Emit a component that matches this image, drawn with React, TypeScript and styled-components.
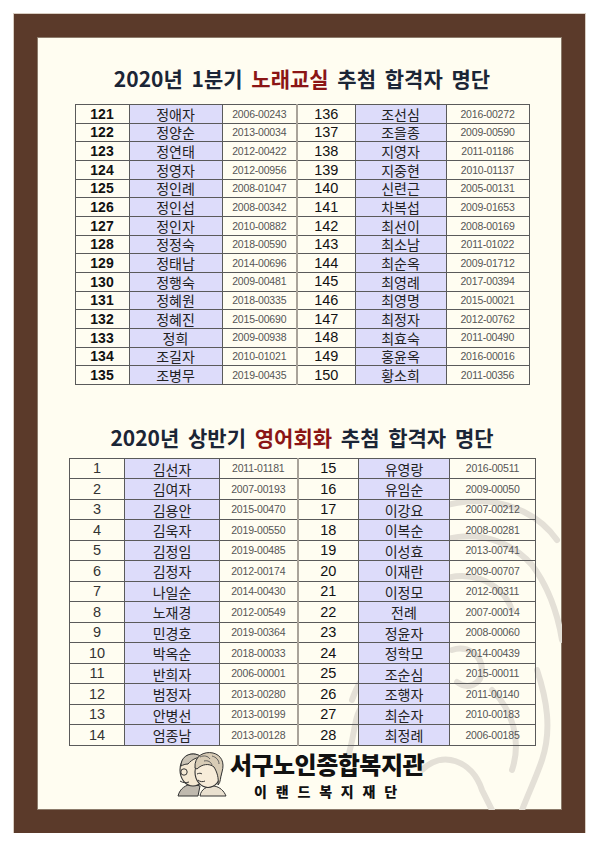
import React from 'react'
import styled, {createGlobalStyle} from 'styled-components'

type Row = [string, string, string, string, string, string]

const singingRows: Row[] = [
  ['121', '정애자', '2006-00243', '136', '조선심', '2016-00272'],
  ['122', '정양순', '2013-00034', '137', '조을종', '2009-00590'],
  ['123', '정연태', '2012-00422', '138', '지영자', '2011-01186'],
  ['124', '정영자', '2012-00956', '139', '지중현', '2010-01137'],
  ['125', '정인례', '2008-01047', '140', '신련근', '2005-00131'],
  ['126', '정인섭', '2008-00342', '141', '차복섭', '2009-01653'],
  ['127', '정인자', '2010-00882', '142', '최선이', '2008-00169'],
  ['128', '정정숙', '2018-00590', '143', '최소남', '2011-01022'],
  ['129', '정태남', '2014-00696', '144', '최순옥', '2009-01712'],
  ['130', '정행숙', '2009-00481', '145', '최영례', '2017-00394'],
  ['131', '정혜원', '2018-00335', '146', '최영명', '2015-00021'],
  ['132', '정혜진', '2015-00690', '147', '최정자', '2012-00762'],
  ['133', '정희', '2009-00938', '148', '최효숙', '2011-00490'],
  ['134', '조길자', '2010-01021', '149', '홍윤옥', '2016-00016'],
  ['135', '조병무', '2019-00435', '150', '황소희', '2011-00356'],
]

const englishRows: Row[] = [
  ['1', '김선자', '2011-01181', '15', '유영랑', '2016-00511'],
  ['2', '김여자', '2007-00193', '16', '유임순', '2009-00050'],
  ['3', '김용안', '2015-00470', '17', '이강요', '2007-00212'],
  ['4', '김욱자', '2019-00550', '18', '이복순', '2008-00281'],
  ['5', '김정임', '2019-00485', '19', '이성효', '2013-00741'],
  ['6', '김정자', '2012-00174', '20', '이재란', '2009-00707'],
  ['7', '나일순', '2014-00430', '21', '이정모', '2012-00311'],
  ['8', '노재경', '2012-00549', '22', '전례', '2007-00014'],
  ['9', '민경호', '2019-00364', '23', '정윤자', '2008-00060'],
  ['10', '박옥순', '2018-00033', '24', '정학모', '2014-00439'],
  ['11', '반희자', '2006-00001', '25', '조순심', '2015-00011'],
  ['12', '범정자', '2013-00280', '26', '조행자', '2011-00140'],
  ['13', '안병선', '2013-00199', '27', '최순자', '2010-00183'],
  ['14', '엄종남', '2013-00128', '28', '최정례', '2006-00185'],
]

type TableProps = {
  rows: Row[]
  widths: number[]
  rowHeight: number
  boldFirst: boolean
}

const WinnerTable: React.FC<TableProps> = ({rows, widths, rowHeight, boldFirst}) => (
  <Table $width={widths.reduce((a, b) => a + b, 0)}>
    <colgroup>
      {widths.map((w, i) => (
        <col key={i} style={{width: w}} />
      ))}
    </colgroup>
    <tbody>
      {rows.map(r => (
        <Tr key={r[0]} $h={rowHeight}>
          <NumCell $bold={boldFirst} $light={!boldFirst}>{r[0]}</NumCell>
          <NameCell>{r[1]}</NameCell>
          <CodeCell $divider>{r[2]}</CodeCell>
          <NumCell>{r[3]}</NumCell>
          <NameCell>{r[4]}</NameCell>
          <CodeCell>{r[5]}</CodeCell>
        </Tr>
      ))}
    </tbody>
  </Table>
)

const Elders: React.FC = () => (
  <svg width="54" height="50" viewBox="0 0 54 50">
    <path d="M4 48 C6 40 12 37 18 36 L26 38 L24 48 Z" fill="#bfb9ae" stroke="#333" strokeWidth="1" />
    <ellipse cx="19" cy="22" rx="13" ry="16" fill="#f4e8d2" stroke="#333" strokeWidth="1.1" />
    <path d="M7 18 C7 6 20 3 28 9 C24 9 18 11 14 16 C11 16 9 17 7 18 Z" fill="#c9c2b4" stroke="#333" strokeWidth="1" />
    <circle cx="10" cy="24" r="3.2" fill="none" stroke="#333" strokeWidth="1" />
    <path d="M6 33 C9 35 12 35 15 34" fill="none" stroke="#333" strokeWidth="1" />
    <path d="M26 48 C27 41 33 38 40 38 C46 39 50 43 52 48 Z" fill="#e9e0cf" stroke="#333" strokeWidth="1" />
    <ellipse cx="34" cy="24" rx="13" ry="15.5" fill="#f7ecd9" stroke="#333" strokeWidth="1.1" />
    <path d="M21 20 C20 8 30 3 39 5 C47 7 51 14 48 24 C46 30 47 34 44 37 C45 30 43 24 40 19 C35 15 28 16 23 21 Z" fill="#d8ccb6" stroke="#333" strokeWidth="1" />
    <path d="M26 9 C30 7 34 8 36 11 M38 8 C42 9 45 12 45 16 M30 13 C34 12 37 14 38 17" fill="none" stroke="#555" strokeWidth="0.9" />
    <path d="M23 26 C25 25 27 25 28 26 M24 32 C26 34 29 34 31 33" fill="none" stroke="#333" strokeWidth="1" />
  </svg>
)

const Watermark: React.FC = () => (
  <WatermarkSvg width="230" height="340" viewBox="0 0 230 340">
    <g fill="none" stroke="#e4e0d7" strokeWidth="6" strokeLinecap="round">
      <path d="M70 60 C110 20 190 20 225 70" />
      <path d="M60 110 C90 60 160 50 200 95 C215 115 225 140 230 170" />
      <path d="M100 115 C130 95 170 110 180 140" />
      <path d="M40 170 C50 140 75 125 100 130" />
      <path d="M20 230 C30 200 50 185 75 190 C95 195 100 215 90 235" />
      <path d="M15 290 C25 260 20 245 35 230" />
      <path d="M120 180 C135 175 150 185 150 200 C150 215 135 220 125 212" />
      <path d="M160 220 C180 240 190 270 180 300" />
      <path d="M90 300 C110 280 140 290 150 320 L160 340" />
      <path d="M60 260 C70 250 85 255 90 268" />
      <path d="M205 200 C215 230 220 260 210 290 C205 305 198 320 190 340" />
    </g>
  </WatermarkSvg>
)

const App: React.FC = () => (
  <>
    <GlobalStyle />
    <Frame>
      <Inner>
        <Watermark />
        <Title>
          2020년 1분기 <Accent>노래교실</Accent> 추첨 합격자 명단
        </Title>
        <TableWrap $top={12}>
          <WinnerTable rows={singingRows} widths={[54, 93, 75, 58, 91, 83]} rowHeight={18.67} boldFirst />
        </TableWrap>
        <Title $top={38}>
          2020년 상반기 <Accent>영어회화</Accent> 추첨 합격자 명단
        </Title>
        <TableWrap $top={7}>
          <WinnerTable rows={englishRows} widths={[55, 95, 78, 61, 91, 86]} rowHeight={20.5} boldFirst={false} />
        </TableWrap>
        <Footer>
          <Elders />
          <FooterText>
            <OrgName>서구노인종합복지관</OrgName>
            <Foundation>이 랜 드 복 지 재 단</Foundation>
          </FooterText>
        </Footer>
      </Inner>
    </Frame>
  </>
)
export default App

const GlobalStyle = createGlobalStyle`
  body {
    margin: 0;
    background: #ffffff;
    font-family: "Noto Sans CJK KR", "Noto Sans", sans-serif;
  }
`

const Frame = styled.div`
  margin: 14px 0 0 14px;
  width: 571px;
  height: 819px;
  box-sizing: border-box;
  padding: 23px;
  background: #5b3a2a;
  box-shadow: 0 0 0 1px #d8cdc2;
`

const Inner = styled.div`
  position: relative;
  height: 100%;
  box-sizing: border-box;
  padding: 0 27px 0 32px;
  background: #fffdf1;
  box-shadow: inset 0 0 0 1px #8c7b6b;
  display: flex;
  flex-direction: column;
  overflow: hidden;
`

const WatermarkSvg = styled.svg`
  position: absolute;
  right: 0;
  bottom: 0;
  z-index: 0;
`

const Title = styled.h2<{$top?: number}>`
  position: relative;
  z-index: 1;
  margin: ${p => p.$top ?? 27}px 0 0;
  font-size: 21px;
  font-weight: 700;
  line-height: 28px;
  text-align: center;
  color: #1b2536;
  word-spacing: 4px;
`

const Accent = styled.span`
  color: #8b1515;
`

const TableWrap = styled.div<{$top: number}>`
  position: relative;
  z-index: 1;
  margin-top: ${p => p.$top}px;
`

const Table = styled.table<{$width: number}>`
  width: ${p => p.$width}px;
  margin: 0 auto;
  border-collapse: collapse;
  table-layout: fixed;
  border: 1px solid #4a4a4a;
`

const Tr = styled.tr<{$h: number}>`
  height: ${p => p.$h}px;
`

const Cell = styled.td`
  padding: 0;
  border: 1px solid #5a5a5a;
  text-align: center;
  vertical-align: middle;
  white-space: nowrap;
`

const NumCell = styled(Cell)<{$bold?: boolean; $light?: boolean}>`
  font-family: "Liberation Sans", Arial, sans-serif;
  font-size: ${p => (p.$bold ? 14 : 14.5)}px;
  font-weight: ${p => (p.$bold ? 700 : 400)};
  color: ${p => (p.$light ? '#333333' : '#111111')};
  line-height: 1;
`

const NameCell = styled(Cell)`
  background: #dddcfa;
  font-size: 14px;
  color: #222222;
  line-height: 1;
`

const CodeCell = styled(Cell)<{$divider?: boolean}>`
  font-family: "Liberation Sans", Arial, sans-serif;
  font-size: 10.5px;
  letter-spacing: -0.2px;
  color: #555555;
  line-height: 1;
  ${p => (p.$divider ? 'border-right: 2px solid #a9a39a;' : '')}
`

const Footer = styled.div`
  position: relative;
  z-index: 1;
  margin-top: 0;
  display: flex;
  justify-content: center;
  align-items: center;
  gap: 2px;
  padding-right: 6px;
`

const FooterText = styled.div`
  display: flex;
  flex-direction: column;
  align-items: center;
`

const OrgName = styled.div`
  font-size: 24px;
  font-weight: 900;
  line-height: normal;
  color: #111111;
  letter-spacing: -0.5px;
`

const Foundation = styled.div`
  font-size: 14px;
  font-weight: 900;
  line-height: normal;
  color: #111111;
  letter-spacing: 2.8px;
`
